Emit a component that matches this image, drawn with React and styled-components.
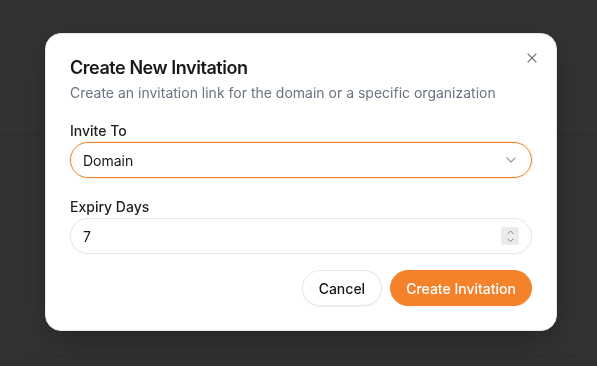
import React from 'react'
import styled, { createGlobalStyle } from 'styled-components'
import { X, ChevronDown, ChevronUp } from 'lucide-react'

const GlobalStyle = createGlobalStyle`
  html, body {
    margin: 0;
    padding: 0;
    background: #333333;
    font-family: Inter, "Noto Sans", "Liberation Sans", sans-serif;
    -webkit-font-smoothing: antialiased;
  }
  * { box-sizing: border-box; }
`

const Page = styled.div`
  display: flex;
  flex-direction: column;
  height: 100vh;
  background: #333333;
`

const PageHeader = styled.div`
  height: 135px;
  border-bottom: 1px solid #2c2c2c;
`

const PageMain = styled.div`
  flex: 1;
`

const PageFooter = styled.div`
  height: 11px;
  border-top: 1px solid #2e2e2e;
  background: #313131;
`

const Dialog = styled.div`
  position: fixed;
  left: 45px;
  top: 33px;
  width: 512px;
  background: #ffffff;
  border: 1px solid #e8e8e8;
  border-radius: 16px;
  padding: 24px;
  box-shadow: 0 10px 30px rgba(0, 0, 0, 0.25);
  display: flex;
  flex-direction: column;
`

const CloseButton = styled.button`
  position: absolute;
  top: 16px;
  right: 16px;
  width: 16px;
  height: 16px;
  padding: 0;
  border: none;
  background: none;
  color: #555558;
  opacity: 0.8;
  display: flex;
  align-items: center;
  justify-content: center;
  cursor: pointer;
`

const Header = styled.div`
  display: flex;
  flex-direction: column;
  gap: 5px;
`

const Title = styled.h2`
  margin: 0;
  font-size: 18px;
  line-height: 20px;
  font-weight: 600;
  color: #18181b;
  letter-spacing: -0.45px;
`

const Description = styled.p`
  margin: 0;
  font-size: 14px;
  line-height: 20px;
  color: #6b7280;
`

const Field = styled.div`
  display: flex;
  flex-direction: column;
  gap: 1px;
  margin-top: ${props => props.mt || '19px'};
`

const Label = styled.label`
  font-size: 14px;
  line-height: 20px;
  font-weight: 500;
  color: #1f1f23;
`

const SelectBox = styled.div`
  height: 36px;
  border-radius: 9999px;
  border: 1px solid #f1812a;
  box-shadow: 0 0 0 1px rgba(241, 129, 42, 0.15);
  padding: 0 12px;
  display: flex;
  align-items: center;
  justify-content: space-between;
  font-size: 14px;
  color: #18181b;
`

const InputBox = styled.div`
  height: 36px;
  border-radius: 9999px;
  border: 1px solid #e6e6e9;
  padding: 0 12px;
  display: flex;
  align-items: center;
  justify-content: space-between;
  font-size: 14px;
  color: #18181b;
  box-shadow: 0 1px 2px rgba(0, 0, 0, 0.03);
`

const Spinner = styled.div`
  width: 18px;
  height: 18px;
  background: #ebebee;
  border-radius: 2px;
  display: flex;
  flex-direction: column;
  align-items: center;
  justify-content: center;
  color: #74747b;
  line-height: 0;

  svg + svg {
    margin-top: -3px;
  }
`

const Footer = styled.div`
  display: flex;
  justify-content: flex-end;
  gap: 8px;
  margin-top: 16px;
`

const Button = styled.button`
  height: 36px;
  padding: 0 ${props => (props.primary ? '15px' : '16px')};
  border-radius: 9999px;
  font-family: inherit;
  font-size: 14px;
  font-weight: 500;
  cursor: pointer;
  border: 1px solid ${props => (props.primary ? '#f3822a' : '#e6e6e9')};
  background: ${props => (props.primary ? '#f3822a' : '#ffffff')};
  color: ${props => (props.primary ? '#ffffff' : '#18181b')};
  box-shadow: 0 1px 2px rgba(0, 0, 0, 0.05);
`

export default function App() {
  return (
    <>
      <GlobalStyle />
      <Page>
        <PageHeader />
        <PageMain />
        <PageFooter />
      </Page>
      <Dialog role="dialog">
        <CloseButton aria-label="Close">
          <X size={16} strokeWidth={1.6} />
        </CloseButton>
        <Header>
          <Title>Create New Invitation</Title>
          <Description>Create an invitation link for the domain or a specific organization</Description>
        </Header>
        <Field mt="18px">
          <Label>Invite To</Label>
          <SelectBox>
            <span>Domain</span>
            <ChevronDown size={16} color="#9a9aa0" strokeWidth={1.8} />
          </SelectBox>
        </Field>
        <Field mt="19px">
          <Label>Expiry Days</Label>
          <InputBox>
            <span>7</span>
            <Spinner>
              <ChevronUp size={11} strokeWidth={2} />
              <ChevronDown size={11} strokeWidth={2} />
            </Spinner>
          </InputBox>
        </Field>
        <Footer>
          <Button>Cancel</Button>
          <Button primary>Create Invitation</Button>
        </Footer>
      </Dialog>
    </>
  )
}
